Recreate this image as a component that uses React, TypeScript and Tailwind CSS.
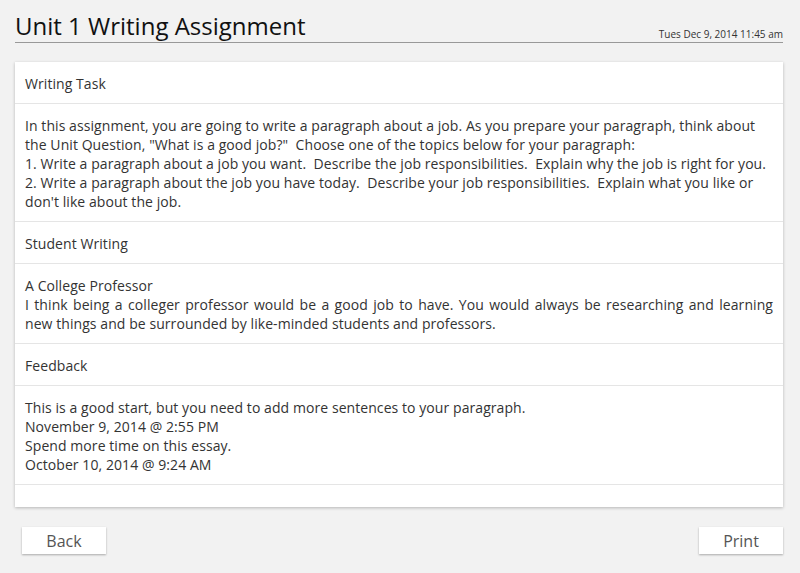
export default function App() {
  return (
    <div className="min-h-screen bg-[#f2f2f2] pl-[15px] pr-[17px] pt-[11px] text-[#333] font-['Open_Sans',sans-serif]">
      {/* Header */}
      <div className="flex items-end justify-between border-b border-[#999] pb-[1px]">
        <h1 className="text-[24px] leading-[30px] text-[#111]">Unit 1 Writing Assignment</h1>
        <div className="text-[10px] leading-[12px] pb-[1px] text-[#333]">Tues Dec 9, 2014 11:45 am</div>
      </div>

      {/* Card */}
      <div className="mt-[19px] bg-white shadow-[0_1px_3px_rgba(0,0,0,0.25)] text-[14px] leading-[19px] tracking-[0.07px]">
        <div className="px-[10px] pt-[12px] pb-[10px] border-b border-[#e5e5e5]">Writing Task</div>
        <div className="px-[10px] pt-[12px] pb-[10px] border-b border-[#e5e5e5]">
          <p>
            In this assignment, you are going to write a paragraph about a job. As you prepare your paragraph, think about
            the Unit Question, "What is a good job?"&nbsp; Choose one of the topics below for your paragraph:
          </p>
          <p>1. Write a paragraph about a job you want.&nbsp; Describe the job responsibilities.&nbsp; Explain why the job is right for you.</p>
          <p>
            2. Write a paragraph about the job you have today.&nbsp; Describe your job responsibilities.&nbsp; Explain what you like or
            don't like about the job.
          </p>
        </div>

        <div className="px-[10px] pt-[12px] pb-[10px] border-b border-[#e5e5e5]">Student Writing</div>
        <div className="px-[10px] pt-[12px] pb-[10px] border-b border-[#e5e5e5] text-justify">
          <p>A College Professor</p>
          <p>
            I think being a colleger professor would be a good job to have. You would always be researching and learning new
            things and be surrounded by like-minded students and professors.
          </p>
        </div>

        <div className="px-[10px] pt-[12px] pb-[10px] border-b border-[#e5e5e5]">Feedback</div>
        <div className="px-[10px] pt-[12px] pb-[10px] border-b border-[#e5e5e5]">
          <p>This is a good start, but you need to add more sentences to your paragraph.</p>
          <p>November 9, 2014 @ 2:55 PM</p>
          <p>Spend more time on this essay.</p>
          <p>October 10, 2014 @ 9:24 AM</p>
        </div>
        <div className="h-[22px]" />
      </div>

      {/* Buttons */}
      <div className="mt-[20px] flex justify-between pl-[7px]">
        <button className="w-[84px] h-[27px] bg-white text-[16px] text-[#555] shadow-[0_1px_2px_rgba(0,0,0,0.3)]">Back</button>
        <button className="w-[84px] h-[27px] bg-white text-[16px] text-[#555] shadow-[0_1px_2px_rgba(0,0,0,0.3)]">Print</button>
      </div>
    </div>
  )
}
